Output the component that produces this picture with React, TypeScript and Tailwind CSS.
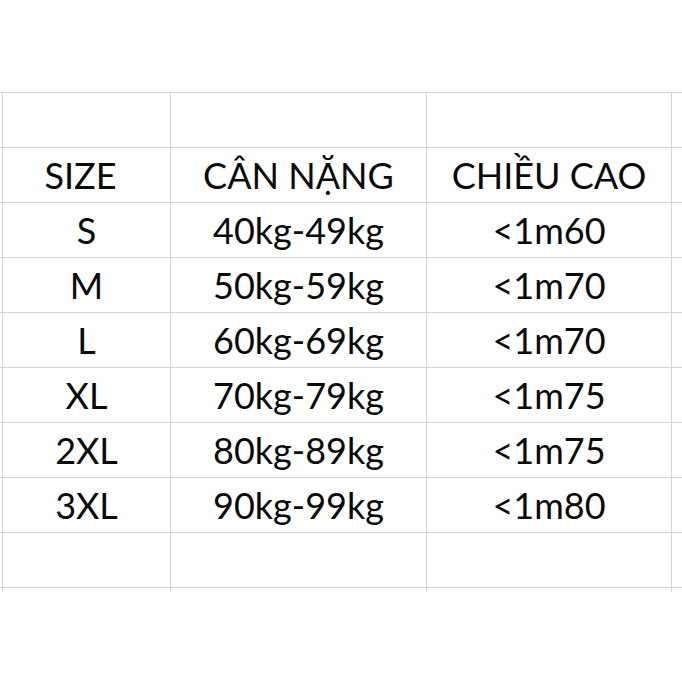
const rows: [string, string, string][] = [
  ["SIZE", "CÂN NẶNG", "CHIỀU CAO"],
  ["S", "40kg-49kg", "<1m60"],
  ["M", "50kg-59kg", "<1m70"],
  ["L", "60kg-69kg", "<1m70"],
  ["XL", "70kg-79kg", "<1m75"],
  ["2XL", "80kg-89kg", "<1m75"],
  ["3XL", "90kg-99kg", "<1m80"],
];

function Row({ cells, head }: { cells: string[]; head?: boolean }) {
  return (
    <div className="flex h-[55px] border-b border-[#d4d4d4]">
      <div className="w-[2px] shrink-0" />
      <div className={`w-[168px] shrink-0 border-l border-[#d4d4d4] flex items-center justify-center ${head ? "pr-[12px]" : ""}`}>
        {cells[0]}
      </div>
      <div className="w-[256px] shrink-0 border-l border-[#d4d4d4] flex items-center justify-center">{cells[1]}</div>
      <div className="w-[245px] shrink-0 border-l border-[#d4d4d4] flex items-center justify-center">{cells[2]}</div>
      <div className="flex-1 border-l border-[#d4d4d4]" />
    </div>
  );
}

export default function App() {
  return (
    <div className="w-[682px] h-[682px] bg-white pt-[92px] text-[#0a0a0a] text-[36px] font-['Lato',sans-serif] overflow-hidden">
      <div className="border-t border-[#d4d4d4]">
        <Row cells={["", "", ""]} />
        {rows.map((r, i) => (
          <Row key={i} cells={r} head={i === 0} />
        ))}
        <Row cells={["", "", ""]} />
        <div className="flex h-[4px]">
          <div className="w-[2px] shrink-0" />
          <div className="w-[168px] shrink-0 border-l border-[#d4d4d4]" />
          <div className="w-[256px] shrink-0 border-l border-[#d4d4d4]" />
          <div className="w-[245px] shrink-0 border-l border-[#d4d4d4]" />
          <div className="flex-1 border-l border-[#d4d4d4]" />
        </div>
      </div>
    </div>
  );
}
